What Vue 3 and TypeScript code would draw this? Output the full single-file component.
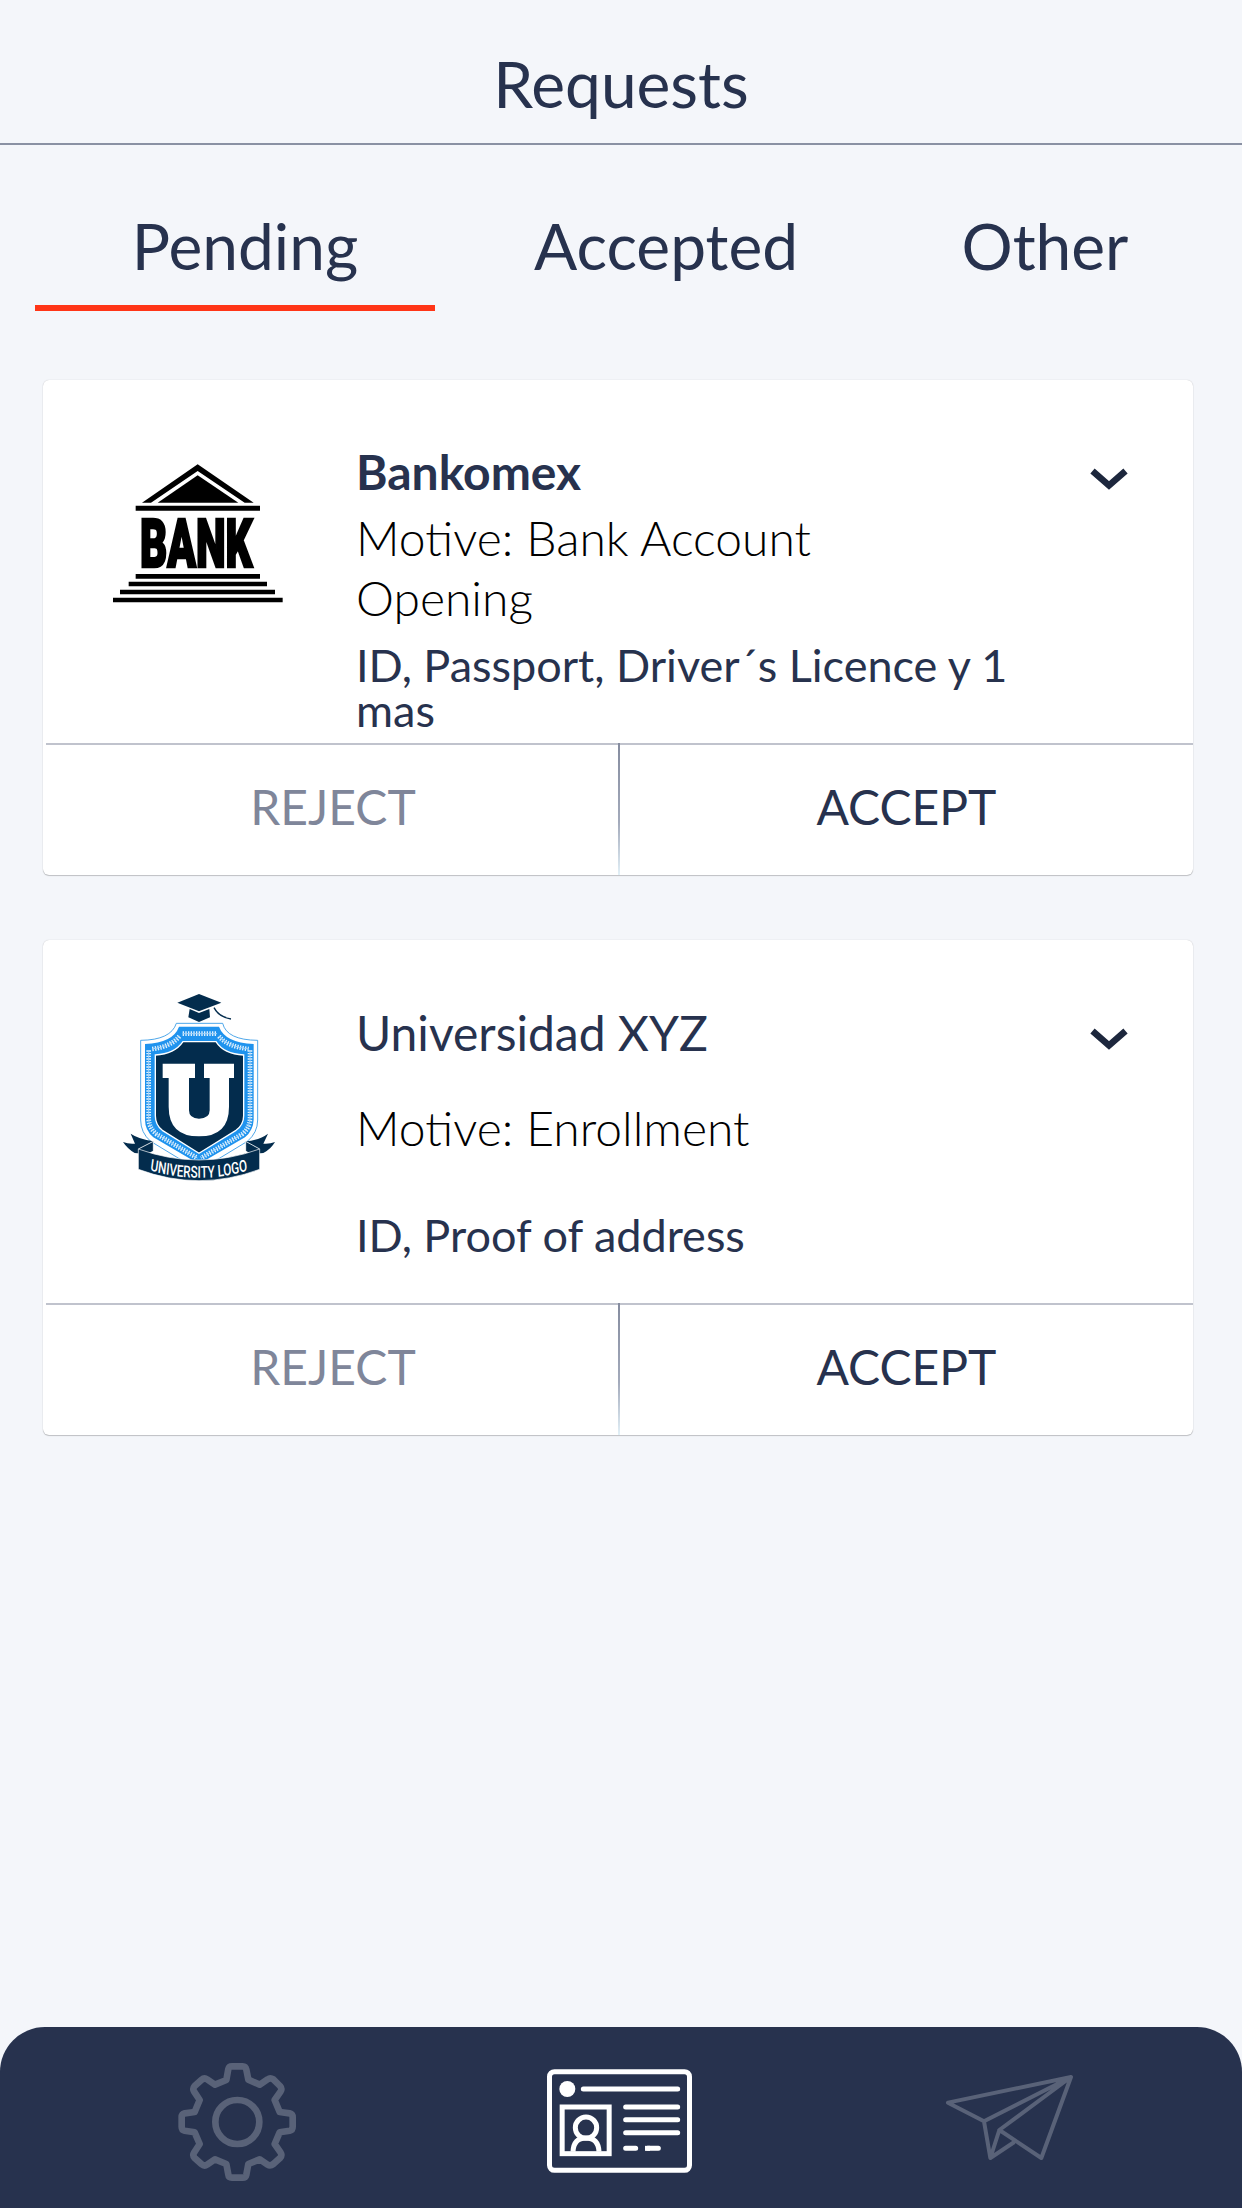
<script setup lang="ts">
import { ref } from 'vue'

interface RequestItem {
  id: string
  name: string
  motive: string
  documents: string
  unread: boolean
}

const tabs = ['Pending', 'Accepted', 'Other']
const activeTab = ref('Pending')

const requests: RequestItem[] = [
  {
    id: 'bank',
    name: 'Bankomex',
    motive: 'Motive: Bank Account Opening',
    documents: 'ID, Passport, Driver´s Licence y 1 mas',
    unread: true,
  },
  {
    id: 'university',
    name: 'Universidad XYZ',
    motive: 'Motive: Enrollment',
    documents: 'ID, Proof of address',
    unread: false,
  },
]
</script>

<template>
  <div class="screen">
    <header class="header">
      <h1 class="title">Requests</h1>
    </header>

    <div class="tabs">
      <button
        v-for="tab in tabs"
        :key="tab"
        class="tab"
        :class="['tab-' + tab.toLowerCase(), { active: tab === activeTab }]"
        @click="activeTab = tab"
      >
        {{ tab }}
      </button>
    </div>

    <main class="list">
      <article v-for="item in requests" :key="item.id" class="card" :class="{ unread: item.unread }">
        <div class="body">
          <div class="logo">
            <svg v-if="item.id === 'bank'" class="bank" width="200" height="170" viewBox="0 0 200 170">
              <g transform="scale(0.33333)">
                <path d="M126 158 L293 43 L461 158 H434 L293 63 L153 158Z" />
                <path d="M173 158 L293 76 L415 158Z" />
                <path d="M107 167H480V182H107Z M107 372H480V386H107Z M86 395H501V409H86Z M60 419H525V433H60Z M39 443H548V457H39Z" />
              </g>
              <text class="bank-text" x="40" y="116.500" textLength="112.500" lengthAdjust="spacingAndGlyphs">BANK</text>
            </svg>
            <svg v-else class="university" width="180" height="220" viewBox="0 0 540 660">
              <defs>
                <path id="ribbon-line" d="M171 571 Q383 616 594 571" />
              </defs>
              <path class="cap" d="M202 68L267 42L334 68L267 94Z" />
              <path class="cap" d="M239 87L267 99L298 87L300 112L267 126L235 112Z" />
              <path class="tassel" d="M312 83Q326 111 363 117" />
              <path class="outline" d="M199 130H338Q350 180 443 181V420Q443 458 412 484L267 572L122 484Q92 458 92 420V181Q183 180 199 130Z" />
              <path class="blue" d="M207 140H327Q345 188 431 192V419Q430 450 405 472L267 552L130 472Q105 450 105 419V192Q190 188 207 140Z" />
              <path class="laurel" d="M218 161H321 M327 169Q353 200 416 207 M208 169Q183 200 126 207 M116 211V414Q116 443 139 462L262 534 M420 211V414Q420 443 397 462L273 534" />
              <path class="laurel-stem" d="M218 161H321 M327 169Q353 200 416 207 M208 169Q183 200 126 207 M116 211V414Q116 443 139 462L262 534 M420 211V414Q420 443 397 462L273 534" />
              <path class="shield" d="M219 185H318Q341 222 401 225V407Q401 434 378 451L267 520L157 451Q136 434 136 407V225Q194 222 219 185Z" />
              <path
                class="letter"
                d="M158 251H255V294H237V391Q237 416 267 416Q299 416 299 391V294H282V251H372V294H357V380Q357 469 267 469Q176 469 176 380V294H158Z"
              />
              <path class="tail" d="M85 507L130 484V512L110 522L74 519Q53 507 39 486Q56 493 75 491L62 461Q86 477 130 484 M449 507L407 484V512L425 522L460 519Q483 507 495 486Q478 493 460 491L474 461Q449 480 407 484" />
              <path class="fold" d="M85 507L130 484V515 M449 507L407 484V515" />
              <path class="ribbon" d="M85 507Q267 573 449 507V568Q267 636 85 568Z" />
              <text class="ribbon-text" transform="scale(0.7 1)">
                <textPath href="#ribbon-line" textLength="422" lengthAdjust="spacingAndGlyphs">UNIVERSITY LOGO</textPath>
              </text>
            </svg>
          </div>
          <div class="info">
            <h2 class="name">{{ item.name }}</h2>
            <p class="motive">{{ item.motive }}</p>
            <p class="documents">{{ item.documents }}</p>
          </div>
          <svg class="chevron" width="38" height="22" viewBox="0 0 38 22">
            <path d="M2.5 3L19 17.500L35.5 3" />
          </svg>
        </div>
        <div class="actions">
          <button class="action reject">REJECT</button>
          <span class="separator"></span>
          <button class="action accept">ACCEPT</button>
        </div>
      </article>
    </main>

    <nav class="nav">
      <svg class="gear" width="170" height="178" viewBox="0 0 510 534">
        <path
          d="M229 150L235 117Q237 109 246 109H278Q287 109 289 119L295 149L329 164L353 148Q361 142 370 148L390 168Q397 176 392 184L374 210L389 246L419 250Q428 252 428 262V290Q428 300 419 302L389 307L374 342L392 368Q397 376 390 384L370 402Q361 409 353 404L329 388L295 402L289 434Q287 443 278 443H246Q236 443 235 434L229 402L195 388L171 404Q163 410 154 402L134 384Q127 376 132 368L149 342L134 307L104 302Q95 300 95 290V262Q95 252 104 250L134 246L149 210L132 184Q127 176 134 168L154 150Q163 142 171 148L195 164Z"
        />
        <circle cx="262" cy="276" r="66" />
      </svg>
      <svg class="id-card" width="200" height="160" viewBox="0 0 600 480">
        <rect x="88.500" y="95" width="420" height="296" rx="15" />
        <circle class="dot" cx="142" cy="147" r="24" />
        <path class="round" d="M190 147H473M317 201H473M317 239H473M317 278H473M317 325H347M383 325H415" />
        <path d="M375 325H390" />
        <rect x="126.500" y="201" width="141" height="140" />
        <circle cx="198" cy="263" r="32" />
        <path d="M159 335Q161 294 198 294Q235 294 237 335" />
      </svg>
      <svg class="plane" width="180" height="150" viewBox="0 0 540 450">
        <path d="M84 188L453 111L364 354L238 270L453 111L192 244ZM192 244L211 354L283 306M211 354L238 270" />
      </svg>
    </nav>
  </div>
</template>

<style>
body {
  margin: 0;
  background: #f4f6fa;
}
</style>

<style scoped>
.screen {
  display: flex;
  flex-direction: column;
  width: 1242px;
  height: 2208px;
  overflow: hidden;
  background: #f4f6fa;
  color: #27324e;
  font-family: Lato, sans-serif;
}
.header {
  box-sizing: border-box;
  height: 145px;
  padding-top: 45px;
  border-bottom: 2px solid #8a91a3;
}
.title {
  margin: 0;
  font-size: 64px;
  line-height: 78px;
  font-weight: 400;
  text-align: center;
}
.tabs {
  display: flex;
  height: 166px;
  margin-left: 35px;
}
button {
  margin: 0;
  padding: 0;
  border: 0;
  background: none;
  color: inherit;
  font: inherit;
}
.tab {
  box-sizing: border-box;
  padding-top: 40px;
  font-size: 64px;
  line-height: 77px;
  border-bottom: 6px solid transparent;
}
.tab-pending {
  width: 400px;
  padding-left: 20px;
}
.tab-accepted {
  width: 462px;
}
.tab-other {
  width: 296px;
}
.tab.active {
  border-bottom-color: #ff3517;
}
.list {
  display: flex;
  flex: 1;
  flex-direction: column;
  gap: 65px;
  padding: 69px 49px 0 43px;
}
.card {
  height: 495px;
  border-radius: 6px;
  background: #fff;
  box-shadow: 0 0 1px rgba(0, 0, 0, 0.25), 0 1px 1px rgba(0, 0, 0, 0.2);
}
.body {
  display: flex;
  height: 363px;
}
.logo {
  width: 313px;
}
.logo svg {
  display: block;
  overflow: visible;
}
.bank {
  margin: 70px 0 0 57px;
}
.university {
  margin: 40px 0 0 67px;
}
.bank-text {
  font: 900 67.5px Roboto, sans-serif;
  stroke: #000;
  stroke-width: 2.6;
}
.cap,
.tail,
.shield,
.ribbon {
  fill: #032c4d;
}
.tassel {
  fill: none;
  stroke: #032c4d;
  stroke-width: 4;
}
.outline {
  fill: #fff;
  stroke: #2b95e5;
  stroke-width: 2.5;
}
.blue {
  fill: #1f93ee;
}
.laurel {
  fill: none;
  stroke: #e2f2fd;
  stroke-width: 14;
  stroke-dasharray: 4 4;
}
.laurel-stem {
  fill: none;
  stroke: #9fd0f7;
  stroke-width: 3;
}
.shield {
  stroke: #fff;
  stroke-width: 4;
}
.letter {
  fill: #fff;
}
.fold {
  fill: none;
  stroke: #fff;
  stroke-width: 2.5;
}
.ribbon {
  stroke: #fff;
  stroke-width: 2;
}
.ribbon-text {
  fill: #fff;
  font: 500 49px Roboto, sans-serif;
}
.info {
  width: 674px;
  padding-top: 62px;
}
.name,
.motive,
.documents {
  margin: 0;
  font-weight: 400;
}
.name {
  padding-top: 1px;
  font-size: 48px;
  line-height: 60px;
}
.unread .name {
  padding-top: 0;
  font-weight: 700;
}
.motive {
  width: 540px;
  margin-top: 35px;
  color: #000;
  font-size: 48px;
  font-weight: 300;
  line-height: 60px;
}
.documents {
  margin-top: 55px;
  font-size: 45px;
  line-height: 45px;
}
.unread .motive {
  margin-top: 6px;
}
.unread .documents {
  margin-top: 15px;
}
.chevron {
  margin: 88px 0 0 60px;
  fill: none;
  stroke: #1d273d;
  stroke-width: 6.5;
}
.actions {
  display: flex;
  height: 132px;
}
.action {
  box-sizing: border-box;
  height: 132px;
  padding-bottom: 8px;
  border-top: 2px solid #c0c3cd;
  font-size: 48px;
}
.reject {
  width: 572px;
  margin-left: 3px;
  padding-left: 2px;
  color: #7f869a;
}
.separator {
  width: 2px;
  height: 132px;
  background: linear-gradient(#858c9f, #a3aabb 60%, #e3f1f8);
}
.accept {
  width: 573px;
}
.nav {
  display: flex;
  box-sizing: border-box;
  height: 181px;
  padding: 3px 142px 0 150px;
  border-radius: 45px 45px 0 0;
  background: #27324e;
}
.nav svg {
  display: block;
  fill: none;
}
.gear {
  stroke: #596278;
  stroke-width: 20;
  stroke-linejoin: round;
}
.id-card {
  margin: 10px 200px 0;
  stroke: #fff;
  stroke-width: 15;
}
.dot {
  fill: #fff;
  stroke: none;
}
.round {
  stroke-linecap: round;
}
.plane {
  margin-top: 10px;
  stroke: #596278;
  stroke-width: 12;
  stroke-linejoin: round;
}
</style>
